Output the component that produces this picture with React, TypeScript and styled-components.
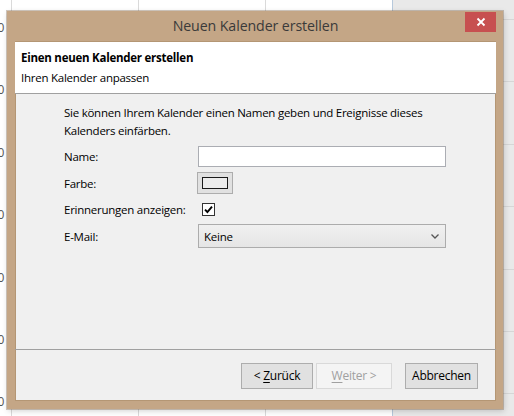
import { styled, createGlobalStyle } from "styled-components";

const GlobalStyle = createGlobalStyle`
  html, body {
    margin: 0;
    padding: 0;
    background: #ffffff;
  }
  body {
    font-family: "Open Sans", "Noto Sans", "Liberation Sans", sans-serif;
    font-size: 11.5px;
    letter-spacing: -0.25px;
    color: #000;
  }
`;

const Desk = styled.div`
  position: relative;
  width: 514px;
  height: 416px;
  overflow: hidden;
  background: #fff;
`;

/* calendar behind the dialog */
const CalendarGrid = styled.div`
  display: flex;
  height: 100%;
`;

const TimeGutter = styled.div`
  width: 11px;
  display: flex;
  flex-direction: column;
  padding-top: 20px;
`;

const TimeLabel = styled.div`
  flex-shrink: 0;
  height: 62.4px;
  display: flex;
  justify-content: flex-end;
  padding-right: 7px;
  font-size: 12px;
  line-height: 16px;
  color: #555;
  white-space: nowrap;
`;

const DayColumn = styled.div`
  width: 126px;
  border-left: 1px solid #dadada;
  background: #fff;
`;

const SidePane = styled.div`
  flex: 1;
  border-left: 1px solid #b7c9dc;
  background: #e9e9e9;
  padding-top: 19px;
  display: flex;
  flex-direction: column;
`;

const SideRow = styled.div`
  flex-shrink: 0;
  height: 61.4px;
  border-top: 1px solid #d6d6d6;
`;

/* the wizard window */
const Window = styled.div`
  position: absolute;
  left: 7px;
  top: 11px;
  width: 496px;
  height: 398px;
  box-sizing: border-box;
  background: #c4a686;
  box-shadow: 0 0 0 1px rgba(120, 95, 70, 0.35), 1px 2px 6px rgba(0, 0, 0, 0.18);
  display: flex;
  flex-direction: column;
  padding: 0 7px 8px 8px;
`;

const TitleBar = styled.div`
  position: relative;
  height: 30px;
  display: flex;
  align-items: center;
  justify-content: center;
`;

const Title = styled.div`
  font-size: 14.2px;
  letter-spacing: -0.1px;
  color: #3a3a3a;
  margin-top: -2px;
`;

const CloseButton = styled.div`
  position: absolute;
  right: 0;
  top: 1px;
  width: 31px;
  height: 20px;
  background: #c75050;
  display: flex;
  align-items: center;
  justify-content: center;
`;

const Client = styled.div`
  flex: 1;
  background: #f0f0f0;
  display: flex;
  flex-direction: column;
  border: 1px solid #b49674;
  border-top: none;
`;

const Header = styled.div`
  background: #fff;
  height: 45px;
  padding: 6px 6px 0 6px;
  border-bottom: 1px solid #a0a0a0;
  border-top: 1px solid #b49674;
  margin: 0 -1px;
`;

const HeaderTitle = styled.div`
  font-weight: bold;
  line-height: 20px;
`;

const HeaderSub = styled.div`
  line-height: 20px;
`;

const Body = styled.div`
  flex: 1;
  padding: 10px 0 0 48px;
`;

const Intro = styled.p`
  margin: 0 0 6px 0;
  line-height: 18px;
  width: 380px;
`;

const Fields = styled.div`
  display: flex;
  flex-direction: column;
  gap: 5px;
`;

const FieldRow = styled.div<{ $h: number }>`
  display: flex;
  align-items: center;
  height: ${({ $h }) => $h}px;
`;

const Label = styled.div`
  width: 134px;
`;

const TextInput = styled.div`
  width: 248px;
  height: 21px;
  box-sizing: border-box;
  background: #fff;
  border: 1px solid #abadb3;
`;

const ColorButton = styled.div`
  width: 36px;
  height: 22px;
  margin-left: -1px;
  box-sizing: border-box;
  background: #e1e1e1;
  border: 1px solid #adadad;
  display: flex;
  align-items: center;
  justify-content: center;
`;

const Swatch = styled.div`
  width: 26px;
  height: 12px;
  box-sizing: border-box;
  border: 1px solid #1a1a1a;
  background: #ececec;
`;

const CheckBox = styled.div`
  width: 13px;
  height: 13px;
  margin-left: 4px;
  box-sizing: border-box;
  border: 1px solid #333;
  background: #fff;
  display: flex;
  align-items: center;
  justify-content: center;
`;

const Select = styled.div`
  width: 248px;
  height: 24px;
  box-sizing: border-box;
  border: 1px solid #acacac;
  background: linear-gradient(#f0f0f0, #e5e5e5);
  display: flex;
  align-items: center;
  justify-content: space-between;
  padding: 0 6px 0 5px;
`;

const Footer = styled.div`
  height: 51px;
  border-top: 1px solid #a0a0a0;
  margin: 0 -1px;
  box-sizing: border-box;
  display: flex;
  justify-content: flex-end;
  align-items: flex-start;
  padding: 13px 18px 0 0;
`;

const WizardButton = styled.div<{ $w: number; $disabled?: boolean; $gap?: number }>`
  width: ${({ $w }) => $w}px;
  height: 26px;
  box-sizing: border-box;
  margin-left: ${({ $gap }) => $gap ?? 0}px;
  background: ${({ $disabled }) => ($disabled ? "#f4f4f4" : "#e1e1e1")};
  border: 1px solid ${({ $disabled }) => ($disabled ? "#d9d9d9" : "#adadad")};
  color: ${({ $disabled }) => ($disabled ? "#a0a0a0" : "#000")};
  display: flex;
  align-items: center;
  justify-content: center;
  line-height: 1;
  font-size: 12px;
`;

const AccessKey = styled.span`
  text-decoration: underline;
  text-underline-offset: 2px;
`;

const hours = ["00:00", "01:00", "02:00", "03:00", "04:00", "05:00", "06:00"];

export default function App() {
  return (
    <>
      <GlobalStyle />
      <Desk>
        <CalendarGrid>
          <TimeGutter>
            {hours.map((h) => (
              <TimeLabel key={h}>{h}</TimeLabel>
            ))}
          </TimeGutter>
          <DayColumn />
          <DayColumn />
          <DayColumn />
          <SidePane>
            {hours.map((h) => (
              <SideRow key={h} />
            ))}
          </SidePane>
        </CalendarGrid>

        <Window>
          <TitleBar>
            <Title>Neuen Kalender erstellen</Title>
            <CloseButton>
              <svg width="10" height="10" viewBox="0 0 10 10">
                <path d="M1.5 1.5 L8.5 8.5 M8.5 1.5 L1.5 8.5" stroke="#fff" strokeWidth="1.8" />
              </svg>
            </CloseButton>
          </TitleBar>
          <Client>
            <Header>
              <HeaderTitle>Einen neuen Kalender erstellen</HeaderTitle>
              <HeaderSub>Ihren Kalender anpassen</HeaderSub>
            </Header>
            <Body>
              <Intro>
                Sie können Ihrem Kalender einen Namen geben und Ereignisse dieses Kalenders einfärben.
              </Intro>
              <Fields>
                <FieldRow $h={21}>
                  <Label>Name:</Label>
                  <TextInput />
                </FieldRow>
                <FieldRow $h={22}>
                  <Label>Farbe:</Label>
                  <ColorButton>
                    <Swatch />
                  </ColorButton>
                </FieldRow>
                <FieldRow $h={20}>
                  <Label>Erinnerungen anzeigen:</Label>
                  <CheckBox>
                    <svg width="9" height="9" viewBox="0 0 9 9">
                      <path d="M1 4.6 L3.4 7 L8 1.6" fill="none" stroke="#000" strokeWidth="1.9" />
                    </svg>
                  </CheckBox>
                </FieldRow>
                <FieldRow $h={24}>
                  <Label>E-Mail:</Label>
                  <Select>
                    <span>Keine</span>
                    <svg width="8" height="5" viewBox="0 0 8 5">
                      <path d="M0.5 0.5 L4 4 L7.5 0.5" fill="none" stroke="#555" strokeWidth="1.3" />
                    </svg>
                  </Select>
                </FieldRow>
              </Fields>
            </Body>
            <Footer>
              <WizardButton $w={72}>
                &lt;&nbsp;<AccessKey>Z</AccessKey>urück
              </WizardButton>
              <WizardButton $w={76} $gap={3} $disabled>
                <AccessKey>W</AccessKey>eiter &gt;
              </WizardButton>
              <WizardButton $w={73} $gap={13}>
                Abbrechen
              </WizardButton>
            </Footer>
          </Client>
        </Window>
      </Desk>
    </>
  );
}
